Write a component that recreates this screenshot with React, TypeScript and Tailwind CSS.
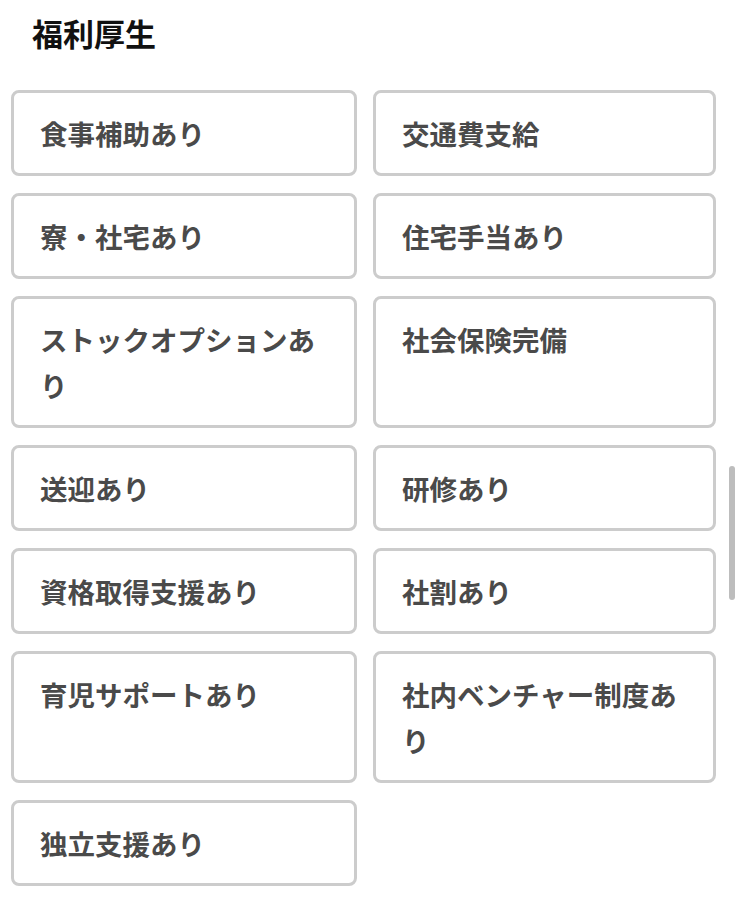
import React from "react";

const items: string[] = [
  "食事補助あり",
  "交通費支給",
  "寮・社宅あり",
  "住宅手当あり",
  "ストックオプションあり",
  "社会保険完備",
  "送迎あり",
  "研修あり",
  "資格取得支援あり",
  "社割あり",
  "育児サポートあり",
  "社内ベンチャー制度あり",
  "独立支援あり",
];

export default function App() {
  return (
    <div
      className="relative w-[740px] h-[906px] bg-white overflow-hidden"
      style={{ fontFamily: '"Noto Sans CJK JP", "Noto Sans", sans-serif' }}
    >
      <h2 className="pl-[32px] pt-[9px] text-[31px] leading-[47px] font-bold text-[#111111]">
        福利厚生
      </h2>
      <div className="mt-[34px] pl-[11px] grid grid-cols-[346px_343px] gap-x-[16px] gap-y-[17px]">
        {items.map((t) => (
          <div
            key={t}
            className="border-[3px] border-[#cccccc] rounded-[8px] px-[26px] py-[17px] text-[27.5px] leading-[46px] font-bold text-[#4a4a4a]"
          >
            {t}
          </div>
        ))}
      </div>
      <div className="absolute left-[729px] top-[466px] w-[6px] h-[134px] rounded-full bg-[#bdbdbd]" />
    </div>
  );
}
